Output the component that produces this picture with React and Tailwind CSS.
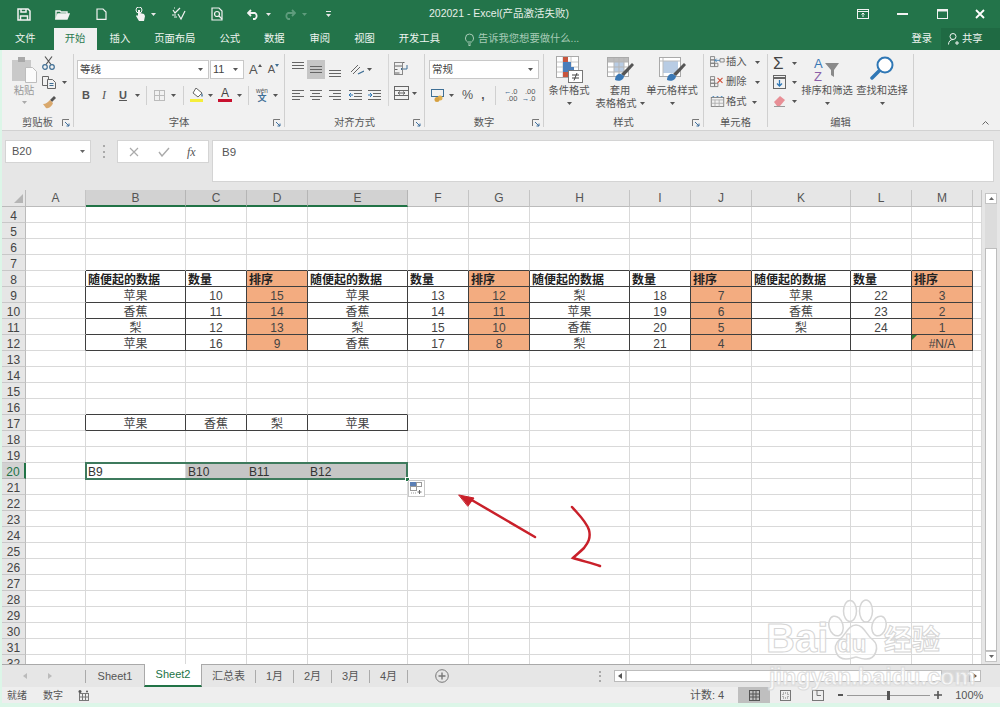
import React from 'react';

const Caret = ({ c = '#555', className = '' }) => (
  <svg width="5" height="3" viewBox="0 0 5 3" className={`shrink-0 ${className}`}><path d="M0 0h5L2.5 3z" fill={c} /></svg>
);

const Launcher = () => (
  <svg width="8" height="8" viewBox="0 0 8 8" className="shrink-0" fill="none" stroke="#777"><path d="M.5 7V.5H7" /><path d="M3 3l4 4M7 4.5V7H4.5" stroke="#3d6f9e" /></svg>
);

const Sep = ({ className = '' }) => <div className={`w-px h-[19px] bg-[#d0d0d0] shrink-0 ${className}`} />;

const Lines = ({ kind, w = 12 }) => {
  const rows = { left: [12, 8, 12, 8], center: [12, 8, 12, 8], right: [12, 8, 12, 8] }[kind];
  return (
    <svg width={w} height="10" viewBox="0 0 12 10" className="shrink-0" stroke="#666">
      {rows.map((l, i) => {
        const x = kind === 'left' ? 0 : kind === 'center' ? (12 - l) / 2 : 12 - l;
        return <path key={i} d={`M${x} ${i * 3 + 0.5}h${l}`} />;
      })}
    </svg>
  );
};

const Indent = ({ flip }) => (
  <svg width="13" height="10" viewBox="0 0 13 10" className="shrink-0" fill="none" stroke="#666">
    <path d="M0 .5h13M5 3.5h8M5 6.5h8M0 9.5h13" />
    {flip ? <path d="M0 5h3.5M2 3l2 2-2 2" stroke="#2f77b5" /> : <path d="M4 5H.5M2 3L0 5l2 2" stroke="#2f77b5" />}
  </svg>
);

const BigCond = () => (
  <svg width="27" height="27" viewBox="0 0 27 27" className="shrink-0">
    <rect x=".5" y=".5" width="22" height="21" fill="#fff" stroke="#aaa" />
    <path d="M7 1v20M15 1v20M1 6h21M1 11h21M1 16h21" stroke="#c8c8c8" />
    <rect x="7" y="1" width="5" height="5" fill="#c8553d" />
    <rect x="7" y="6" width="8" height="5" fill="#4a7ebb" />
    <rect x="7" y="11" width="11" height="5" fill="#4a7ebb" />
    <rect x="7" y="16" width="5" height="5" fill="#c8553d" />
    <rect x="12.5" y="14.5" width="14" height="12" fill="#fff" stroke="#777" />
    <path d="M16 19h7M16 22h7M21 17l-3 7.5" stroke="#444" fill="none" />
  </svg>
);

const Brush = () => (
  <g>
    <path d="M25 7l2 2-10 11-3-2z" fill="#555" />
    <path d="M8 24c0-4 3-7 6-6l3 2c0 4-5 6-9 4z" fill="#3a78b5" />
  </g>
);

const BigTable = () => (
  <svg width="27" height="27" viewBox="0 0 27 27" className="shrink-0">
    <rect x=".5" y="1.5" width="21" height="19" fill="#fff" stroke="#aaa" />
    <rect x="1" y="2" width="20" height="4" fill="#bcbcbc" />
    <rect x="7" y="6" width="10" height="10" fill="#b8cce4" />
    <path d="M7 2v18M12 2v18M17 2v18M1 6h20M1 11h20M1 16h20" stroke="#b5b5b5" />
    <Brush />
  </svg>
);

const BigStyle = () => (
  <svg width="27" height="27" viewBox="0 0 27 27" className="shrink-0">
    <rect x=".5" y="1.5" width="21" height="19" fill="#fff" stroke="#aaa" />
    <rect x="4" y="5" width="15" height="12" fill="#b8cce4" />
    <path d="M1 5h20M4 2v18" stroke="#bbb" />
    <Brush />
  </svg>
);

const CellIcon = ({ kind }) => (
  <svg width="15" height="12" viewBox="0 0 18 14" className="shrink-0" fill="none" stroke="#777">
    {kind === 'fmt' ? (
      <>
        <rect x="1.5" y="1.5" width="15" height="11" />
        <path d="M1.5 4.5h15M6 4.5v8M11 4.5v8M1.5 8.5h15" stroke="#aaa" />
        <path d="M3 .5h2M8 .5h2M13 .5h2" stroke="#2f77b5" />
      </>
    ) : (
      <>
        <path d="M.5 .5h5v4h-5zM.5 4.5h5v4h-5zM.5 8.5h5v4h-5zM5.500 8.500h4v4h-4z" />
        {kind === 'ins' ? (
          <>
            <path d="M12 5H6M8 3L6 5l2 2" stroke="#2f77b5" />
            <path d="M12 3h5v4h-5z" />
          </>
        ) : (
          <path d="M9 2l6 6M15 2L9 8" stroke="#d0513a" strokeWidth="1.4" />
        )}
      </>
    )}
  </svg>
);

const FormulaBar = () => (
  <div className="flex h-[43px] items-start">
    <div className="ml-[3px] mt-px flex h-[23px] w-[86px] items-center justify-between border border-[#d4d4d4] bg-white pl-[6px] pr-[5px] text-[11px] text-[#555]">
      <span>B20</span>
      <Caret c="#666" />
    </div>
    <div className="ml-[12px] mt-[5px] flex h-[15px] w-[2px] flex-col justify-between py-px">
      <div className="h-[2px] w-[2px] bg-[#aaa]" />
      <div className="h-[2px] w-[2px] bg-[#aaa]" />
      <div className="h-[2px] w-[2px] bg-[#aaa]" />
    </div>
    <div className="ml-[12px] mt-px flex h-[23px] w-[92px] items-center border border-[#d4d4d4] bg-white">
      <svg width="10" height="10" viewBox="0 0 10 10" className="ml-[11px]" stroke="#aaa" strokeWidth="1.2"><path d="M1 1l8 8M9 1L1 9" /></svg>
      <svg width="12" height="10" viewBox="0 0 12 10" className="ml-[19px]" fill="none" stroke="#aaa" strokeWidth="1.4"><path d="M1 5l3 4 7-8" /></svg>
      <span className="ml-[17px] font-['Liberation_Serif',serif] text-[12px] italic text-[#555]">fx</span>
    </div>
    <div className="ml-[3px] mt-px flex h-[42px] w-[782px] items-start border border-[#d4d4d4] bg-white pl-[9px] pt-[3px] text-[11.5px] text-[#555]">B9</div>
  </div>
);

const widths = 'grid-cols-[24px_60px_100px_61px_61px_100px_61px_61px_100px_61px_61px_99px_61px_61px_9px]';
const colNames = ['', 'A', 'B', 'C', 'D', 'E', 'F', 'G', 'H', 'I', 'J', 'K', 'L', 'M', ''];
const head = ['随便起的数据', '数量', '排序'];
const tableRows = {
  8: [...head, ...head, ...head, ...head],
  9: ['苹果', '10', '15', '苹果', '13', '12', '梨', '18', '7', '苹果', '22', '3'],
  10: ['香蕉', '11', '14', '香蕉', '14', '11', '苹果', '19', '6', '香蕉', '23', '2'],
  11: ['梨', '12', '13', '梨', '15', '10', '香蕉', '20', '5', '梨', '24', '1'],
  12: ['苹果', '16', '9', '香蕉', '17', '8', '梨', '21', '4', '', '', '#N/A'],
  17: ['苹果', '香蕉', '梨', '苹果'],
  20: ['B9', 'B10', 'B11', 'B12'],
};
const rowsList = Array.from({ length: 29 }, (_, i) => i + 4);

const inTable = (r, c) => {
  if (r >= 8 && r <= 12) return c >= 2 && c <= 13;
  if (r === 17) return c >= 2 && c <= 5;
  return false;
};

const Cell = ({ r, c }) => {
  const dark = { right: inTable(r, c) || inTable(r, c + 1), bottom: inTable(r, c) || inTable(r + 1, c) };
  const selected = r === 20 && c >= 3 && c <= 5;
  const orange = r >= 8 && r <= 12 && (c === 4 || c === 7 || c === 10 || c === 13);
  const text = tableRows[r] && c >= 2 ? tableRows[r][c - 2] : '';
  const right = selected ? 'border-r-[#c6c6c6]' : dark.right ? 'border-r-[#3f3f3f]' : 'border-r-[#d9d9d9]';
  const bottom = dark.bottom ? 'border-b-[#3f3f3f]' : 'border-b-[#d9d9d9]';
  const bg = selected ? 'bg-[#c6c6c6]' : orange ? 'bg-[#f3ac80]' : 'bg-white';
  const align = r === 8 ? 'text-left pl-[2px] font-bold text-[12.5px] text-[#222]' : r === 20 ? 'text-left pl-[2px] text-[#333]' : 'text-center text-[#444]';
  return (
    <div className={`relative h-[16px] overflow-hidden whitespace-nowrap border-r border-b text-[12px] leading-[18px] ${right} ${bottom} ${bg} ${align}`}>
      {r === 12 && c === 13 && (
        <svg width="5" height="5" viewBox="0 0 5 5" className="absolute left-0 top-0"><path d="M0 0h5L0 5z" fill="#2e7d32" /></svg>
      )}
      {text}
    </div>
  );
};

const Grid = () => (
  <div className={`relative grid h-[474px] w-[980px] auto-rows-[16px] grid-rows-[17px] overflow-hidden bg-white ${widths}`}>
    {colNames.map((n, c) => {
      const sel = c >= 2 && c <= 5;
      return (
        <div
          key={c}
          className={`flex h-[17px] items-center justify-center text-[12px] text-[#555] ${c === 0 ? 'border-r border-b border-r-[#bbb] border-b-[#bbb] bg-[#e6e6e6]' : sel ? 'border-r border-b-2 border-r-[#b5b5b5] border-b-[#217346] bg-[#d2d2d2]' : 'border-r border-b border-r-[#c4c4c4] border-b-[#bbb] bg-[#e6e6e6]'}`}
        >
          {c === 0 ? (
            <svg width="10" height="10" viewBox="0 0 10 10" className="ml-[10px]"><path d="M9 1v9H0z" fill="#b5b5b5" /></svg>
          ) : n}
        </div>
      );
    })}
    {rowsList.map((r) => (
      <React.Fragment key={r}>
        <div className={`h-[16px] border-b border-r text-center text-[12px] leading-[18px] text-[#444] ${r === 20 ? 'border-r-2 border-b-[#b5b5b5] border-r-[#217346] bg-[#d2d2d2] text-[#217346]' : 'border-b-[#c8c8c8] border-r-[#bbb] bg-[#e6e6e6]'}`}>{r}</div>
        {Array.from({ length: 14 }, (_, i) => <Cell key={i} r={r} c={i + 1} />)}
      </React.Fragment>
    ))}
    <div className="pointer-events-none absolute left-[83px] top-[272px] h-[18px] w-[323px] border-2 border-[#3e7a5d]" />
    <div className="absolute left-[403px] top-[287px] h-[5px] w-[5px] border border-white bg-[#217346]" />
    <div className="absolute left-[406px] top-[290px] flex h-[17px] w-[17px] items-center justify-center border border-[#c8c8c8] bg-white">
      <svg width="13" height="13" viewBox="0 0 13 13" fill="none" stroke="#999">
        <rect x=".5" y=".5" width="6" height="4" fill="#5b7fb5" stroke="#5b7fb5" />
        <rect x="6.5" y=".5" width="5" height="4" />
        <rect x=".5" y="4.5" width="6" height="4" />
        <path d="M1 11h5" strokeDasharray="1 1" />
        <path d="M9.5 8v4M7.5 10h4" stroke="#666" />
      </svg>
    </div>
  </div>
);

const VScroll = () => (
  <div className="ml-[3px] flex h-[474px] w-[12px] flex-col">
    <div className="mt-[3px] flex h-[11px] items-center justify-center border border-[#c4c4c4] bg-white">
      <svg width="5" height="3" viewBox="0 0 5 3"><path d="M2.5 0L5 3H0z" fill="#666" /></svg>
    </div>
    <div className="h-[44px] bg-[#dcdcdc]" />
    <div className="h-[403px] border border-[#bdbdbd] bg-white" />
    <div className="flex h-[11px] items-center justify-center border border-[#c4c4c4] bg-white"><Caret c="#666" /></div>
  </div>
);

const SheetTab = ({ children, w }) => (
  <div className={`flex h-full items-center justify-center text-[11px] text-[#555] ${w}`}>{children}</div>
);
const TabDiv = ({ className = '' }) => <div className={`h-[13px] w-px shrink-0 bg-[#aaa] ${className}`} />;

const SheetTabs = () => (
  <div className="flex h-[23px] items-center border-t border-[#a9a9a9] bg-[#e6e6e6]">
    <svg width="4" height="6" viewBox="0 0 4 6" className="ml-[21px]"><path d="M4 0v6L0 3z" fill="#bbb" /></svg>
    <svg width="4" height="6" viewBox="0 0 4 6" className="ml-[21px]"><path d="M0 0v6l4-3z" fill="#bbb" /></svg>
    <TabDiv className="ml-[33px]" />
    <SheetTab w="w-[58px]">Sheet1</SheetTab>
    <div className="-mt-px flex h-[23px] w-[58px] items-center justify-center border-x border-b-2 border-x-[#a9a9a9] border-b-[#217346] bg-white text-[11px] text-[#217346]">Sheet2</div>
    <SheetTab w="w-[53px]">汇总表</SheetTab>
    <TabDiv />
    <SheetTab w="w-[37px]">1月</SheetTab>
    <TabDiv />
    <SheetTab w="w-[37px]">2月</SheetTab>
    <TabDiv />
    <SheetTab w="w-[37px]">3月</SheetTab>
    <TabDiv />
    <SheetTab w="w-[37px]">4月</SheetTab>
    <TabDiv />
    <svg width="14" height="14" viewBox="0 0 14 14" className="ml-[27px]" fill="none" stroke="#777"><circle cx="7" cy="7" r="6.3" /><path d="M7 3.5v7M3.5 7h7" strokeWidth="1.4" /></svg>
    <div className="ml-[150px] flex h-[11px] w-[2px] flex-col justify-between">
      <div className="h-[2px] w-[2px] bg-[#aaa]" />
      <div className="h-[2px] w-[2px] bg-[#aaa]" />
      <div className="h-[2px] w-[2px] bg-[#aaa]" />
    </div>
    <div className="ml-[13px] flex h-[12px] w-[12px] items-center justify-center border border-[#bbb] bg-white">
      <svg width="4" height="6" viewBox="0 0 4 6"><path d="M4 0v6L0 3z" fill="#555" /></svg>
    </div>
    <div className="h-[12px] w-[316px] border border-[#bdbdbd] bg-white" />
    <div className="h-[12px] w-[27px] bg-[#d6d6d6]" />
    <div className="flex h-[12px] w-[12px] items-center justify-center border border-[#bbb] bg-white">
      <svg width="4" height="6" viewBox="0 0 4 6"><path d="M0 0v6l4-3z" fill="#555" /></svg>
    </div>
  </div>
);

const StatusBar = () => (
  <div className="flex h-[16px] items-center bg-[#eeeeee] text-[10px] text-[#555]">
    <span className="ml-[5px]">就绪</span>
    <span className="ml-[16px]">数字</span>
    <svg width="11" height="11" viewBox="0 0 11 11" className="ml-[15px]" fill="none" stroke="#777">
      <rect x="1.5" y="3.5" width="9" height="7" />
      <path d="M4.5 3.5v7M7.5 3.5v7M1.5 7h9" />
      <circle cx="2" cy="1.5" r="1.5" fill="#555" stroke="none" />
      <circle cx="9" cy="1.5" r="1" fill="#555" stroke="none" />
    </svg>
    <span className="ml-[601px] text-[11px]">计数: 4</span>
    <div className="ml-[14px] flex h-[16px] w-[32px] items-center justify-center bg-[#bfbfbf]">
      <svg width="11" height="11" viewBox="0 0 11 11" fill="none" stroke="#555"><rect x=".5" y=".5" width="10" height="10" /><path d="M4 .5v10M7 .5v10M.5 4h10M.5 7h10" /></svg>
    </div>
    <svg width="11" height="11" viewBox="0 0 11 11" className="ml-[10px]" fill="none" stroke="#777"><rect x=".5" y=".5" width="10" height="10" /><rect x="3" y="3" width="5" height="5" strokeDasharray="1 1" /></svg>
    <svg width="12" height="11" viewBox="0 0 12 11" className="ml-[21px]" fill="none" stroke="#777"><rect x=".5" y=".5" width="11" height="10" /><path d="M5 .5v5h4" /></svg>
    <div className="ml-[14px] h-[2px] w-[5px] bg-[#555]" />
    <div className="ml-[4px] flex h-[9px] w-[83px] items-center">
      <div className="h-px w-[40px] bg-[#999]" />
      <div className="h-[9px] w-[3px] bg-[#555]" />
      <div className="h-px w-[40px] bg-[#999]" />
    </div>
    <svg width="8" height="8" viewBox="0 0 8 8" className="ml-[4px] shrink-0" stroke="#555" strokeWidth="1.6"><path d="M4 0v8M0 4h8" /></svg>
    <span className="ml-[13px] text-[11px]">100%</span>
  </div>
);

const TitleBar = () => (
  <div className="flex h-[28px] items-center bg-[#23744a] text-[#e6efe9]">
    <svg width="14" height="13" viewBox="0 0 14 13" className="ml-[17px] shrink-0" fill="none" stroke="#f2f2f2" strokeWidth="1.5"><path d="M1 1h10l2 2v9H1z" /><path d="M4 1v3h5V1M3.5 12V8h7v4" /></svg>
    <svg width="15" height="11" viewBox="0 0 15 11" className="ml-[24px] shrink-0" fill="none" stroke="#f2f2f2" strokeWidth="1.4"><path d="M1 10V2h4l1 1h6v2" /><path d="M1 10l2-5h11l-2 5z" fill="#f2f2f2" /></svg>
    <svg width="11" height="12" viewBox="0 0 11 12" className="ml-[26px] shrink-0" fill="none" stroke="#f2f2f2" strokeWidth="1.2"><path d="M1 1h6l3 3v7.400H1z" /></svg>
    <svg width="11" height="14" viewBox="0 0 11 14" className="ml-[28px] shrink-0" fill="#f2f2f2"><circle cx="4" cy="3" r="3" fill="none" stroke="#f2f2f2" /><path d="M3 3h2v3l4 1 1 2-1 5H4L1 9l1-1 1 1z" /></svg>
    <Caret c="#e8e8e8" className="ml-[5px]" />
    <svg width="15" height="14" viewBox="0 0 15 14" className="ml-[15px] shrink-0" fill="none" stroke="#f2f2f2" strokeWidth="1.2"><path d="M2 3l2 3 5-5M3 1l1 0M7 7l3 5 4-8M1 8h4M3 10h3" /></svg>
    <svg width="13" height="14" viewBox="0 0 13 14" className="ml-[25px] shrink-0" fill="none" stroke="#f2f2f2" strokeWidth="1.2"><path d="M1 1h7l3 3v9H1z" /><circle cx="6" cy="7" r="2.500" /><path d="M8 9l3 3" /></svg>
    <svg width="13" height="11" viewBox="0 0 13 11" className="ml-[23px] shrink-0" fill="none" stroke="#f2f2f2" strokeWidth="1.8"><path d="M1 4h7a3.500 3.500 0 010 6H6M4 1L1 4l3 3" /></svg>
    <Caret c="#e8e8e8" className="ml-[6px]" />
    <svg width="13" height="11" viewBox="0 0 13 11" className="ml-[12px] shrink-0" fill="none" stroke="#5f9c7d" strokeWidth="1.8"><path d="M12 4H5a3.500 3.500 0 000 6h2M9 1l3 3-3 3" /></svg>
    <Caret c="#5f9c7d" className="ml-[6px]" />
    <div className="ml-[18px] flex w-[6px] shrink-0 flex-col items-center gap-[2px]">
      <div className="h-px w-[5px] bg-[#e8e8e8]" />
      <Caret c="#e8e8e8" />
    </div>
    <span className="ml-[98px] whitespace-nowrap text-[10.5px]">202021 - Excel(产品激活失败)</span>
    <div className="ml-auto flex items-center pr-[15px]">
      <svg width="12" height="10" viewBox="0 0 12 10" fill="none" stroke="#f2f2f2"><rect x=".5" y=".5" width="11" height="9" /><path d="M1 2.500h10M6 8V4M4.500 5.500L6 4l1.500 1.500" /></svg>
      <div className="ml-[28px] h-[2px] w-[11px] bg-[#f2f2f2]" />
      <svg width="11" height="10" viewBox="0 0 11 10" className="ml-[29px]" fill="none" stroke="#f2f2f2"><rect x=".5" y=".5" width="10" height="9" /><path d="M0 1.500h11" strokeWidth="2" /></svg>
      <svg width="10" height="10" viewBox="0 0 10 10" className="ml-[27px]" stroke="#fff" strokeWidth="1.8"><path d="M1 1l8 8M9 1L1 9" /></svg>
    </div>
  </div>
);

const TabItem = ({ children, ml }) => <span className={`whitespace-nowrap ${ml}`}>{children}</span>;

const TabBar = () => (
  <div className="flex h-[22px] items-center bg-[#23744a] text-[10.3px] text-[#eef4f0]">
    <TabItem ml="ml-[15px]">文件</TabItem>
    <div className="ml-[18px] flex h-[22px] w-[43px] items-center justify-center bg-[#f1f1f1] text-[#2c7a50]">开始</div>
    <TabItem ml="ml-[13px]">插入</TabItem>
    <TabItem ml="ml-[24px]">页面布局</TabItem>
    <TabItem ml="ml-[24px]">公式</TabItem>
    <TabItem ml="ml-[24px]">数据</TabItem>
    <TabItem ml="ml-[25px]">审阅</TabItem>
    <TabItem ml="ml-[24px]">视图</TabItem>
    <TabItem ml="ml-[24px]">开发工具</TabItem>
    <svg width="9" height="13" viewBox="0 0 9 13" className="ml-[25px] shrink-0" fill="none" stroke="#a9ccb8"><path d="M2.500 9C1 8 .5 6.500 .5 5a4 4 0 018 0c0 1.500-.5 3-2 4zM3 11h3M3.500 12.500h2" /></svg>
    <span className="ml-[4px] whitespace-nowrap text-[#a9ccb8]">告诉我您想要做什么...</span>
    <span className="ml-auto whitespace-nowrap">登录</span>
    <div className="ml-[9px] flex h-[22px] w-[59px] items-center bg-[#1f6a43] pl-[7px]">
      <svg width="12" height="12" viewBox="0 0 12 12" fill="none" stroke="#eef4f0"><circle cx="5" cy="3.500" r="3" /><path d="M.5 11.500c0-3 2-5 4.500-5M9 8v4M7 10h4" /></svg>
      <span className="ml-[2px]">共享</span>
    </div>
  </div>
);

const Group = ({ w, label, launcher, children }) => (
  <div className={`flex h-[73px] shrink-0 flex-col border-r border-[#d0d0d0] ${w}`}>
    <div className="h-[62px]">{children}</div>
    <div className="grid h-[11px] grid-cols-[1fr_auto_1fr] items-center text-[10.3px] leading-[13px] text-[#555]">
      <div />
      <span>{label}</span>
      <div className="flex justify-end pr-[3px]">{launcher && <Launcher />}</div>
    </div>
  </div>
);

const Clipboard = () => (
  <Group w="w-[72px]" label="剪贴板" launcher>
    <div className="flex">
      <div className="ml-[10px] flex w-[24px] flex-col items-center pt-[3px]">
        <svg width="25" height="26" viewBox="0 0 25 26" className="shrink-0">
          <rect x="0" y="3" width="19" height="21" fill="#c9c9c9" />
          <rect x="6" y="0" width="7" height="5" fill="#a9a9a9" />
          <path d="M13.500 10.500h7l4 4v11h-11z" fill="#fbfbfb" stroke="#bdbdbd" />
        </svg>
        <span className="mt-[1px] text-[10.3px] leading-[13px] text-[#999]">粘贴</span>
        <Caret c="#aaa" className="mt-[4px]" />
      </div>
      <div className="ml-[6px] flex flex-col pt-[2px]">
        <svg width="13" height="14" viewBox="0 0 13 14" fill="none" stroke="#3f6f95" strokeWidth="1.2"><path d="M3 .5l6 8M10 .5l-6 8" stroke="#555" /><circle cx="3" cy="11" r="2.300" /><circle cx="10" cy="11" r="2.300" /></svg>
        <div className="mt-[6px] flex items-center">
          <svg width="14" height="13" viewBox="0 0 14 13" fill="none" stroke="#666"><path d="M.5.500h6v9h-6z" /><path d="M5.500 3.500h5l3 3v6h-8z" fill="#f1f1f1" /><path d="M7.500 7.500h4M7.500 9.500h4" stroke="#3f6f95" /></svg>
          <Caret className="ml-[6px]" />
        </div>
        <svg width="14" height="14" viewBox="0 0 14 14" className="mt-[6px]"><path d="M8 5l4-4 2 2-4 4z" fill="#555" /><path d="M1 9c3 0 5-2 7-4l3 3c-1 3-4 6-7 5z" fill="#d9a86c" /></svg>
      </div>
    </div>
  </Group>
);

const FontGroup = () => (
  <Group w="w-[211px]" label="字体" launcher>
    <div className="ml-[3px] mt-[6px] flex h-[19px] items-center">
      <div className="flex h-[19px] w-[132px] items-center justify-between border border-[#c8c8c8] bg-white pl-[2px] pr-[5px] text-[10.5px] text-[#444]">
        <span>等线</span><Caret />
      </div>
      <div className="ml-px flex h-[19px] w-[34px] items-center justify-between border border-[#c8c8c8] bg-white pl-[2px] pr-[5px] text-[11px] text-[#444]">
        <span>11</span><Caret />
      </div>
      <span className="ml-[5px] text-[13px] leading-none text-[#555]">A</span>
      <svg width="4" height="3" viewBox="0 0 4 3" className="mb-[8px]"><path d="M2 0l2 3H0z" fill="#555" /></svg>
      <span className="ml-[6px] text-[11px] leading-none text-[#555]">A</span>
      <svg width="4" height="3" viewBox="0 0 4 3" className="mb-[8px]"><path d="M0 0h4L2 3z" fill="#3f6f95" /></svg>
    </div>
    <div className="ml-[8px] mt-[6px] flex h-[20px] items-center text-[#555]">
      <span className="w-[7px] text-[11px] font-bold leading-none">B</span>
      <span className="ml-[13px] w-[5px] font-['Liberation_Serif',serif] text-[12px] italic leading-none">I</span>
      <span className="ml-[12px] w-[8px] text-[11px] font-bold leading-none underline">U</span>
      <Caret className="ml-[8px]" />
      <Sep className="ml-[6px]" />
      <svg width="11" height="11" viewBox="0 0 11 11" className="ml-[7px]" fill="none" stroke="#bbb"><rect x=".5" y=".5" width="10" height="10" /><path d="M5.500 .5v10M.5 5.500h10" /></svg>
      <Caret className="ml-[6px]" />
      <Sep className="ml-[7px]" />
      <div className="ml-[6px] flex w-[13px] flex-col items-center">
        <svg width="12" height="10" viewBox="0 0 12 10"><path d="M5 0l6 5-4 4-5-4z" fill="#fff" stroke="#666" /><path d="M11 5c1 2 1 3 0 4-1-1-1-2 0-4z" fill="#3f6f95" /></svg>
        <div className="mt-px h-[3px] w-[13px] bg-[#f5ee3a]" />
      </div>
      <Caret className="ml-[5px]" />
      <div className="ml-[5px] flex w-[14px] flex-col items-center">
        <span className="h-[10px] text-[12px] leading-[10px] text-[#444]">A</span>
        <div className="mt-px h-[3px] w-[14px] bg-[#c8102e]" />
      </div>
      <Caret className="ml-[5px]" />
      <Sep className="ml-[6px]" />
      <div className="ml-[6px] flex w-[14px] flex-col items-center">
        <span className="h-[6px] text-[6.5px] leading-[6px]">wén</span>
        <span className="h-[9px] text-[9px] font-bold leading-[9px] text-[#3f6f95]">文</span>
      </div>
      <Caret className="ml-[4px]" />
    </div>
  </Group>
);

const AlignGroup = () => (
  <Group w="w-[140px]" label="对齐方式" launcher>
    <div className="flex h-[60px]">
      <div className="w-[103px]">
        <div className="mt-[6px] flex h-[19px] items-center">
          <svg width="12" height="8" viewBox="0 0 12 8" className="mb-[8px] ml-[7px]" stroke="#666"><path d="M0 .5h12M0 3.500h12M0 6.500h12" /></svg>
          <div className="ml-[3px] flex h-[19px] w-[18px] items-center justify-center bg-[#c6c6c6]">
            <svg width="12" height="8" viewBox="0 0 12 8" stroke="#666"><path d="M0 .5h12M0 3.500h12M0 6.500h12" /></svg>
          </div>
          <svg width="12" height="8" viewBox="0 0 12 8" className="ml-[4px] mt-[8px]" stroke="#666"><path d="M0 .5h12M0 3.500h12M0 6.500h12" /></svg>
          <svg width="14" height="12" viewBox="0 0 14 12" className="ml-[9px]" fill="none" stroke="#666"><path d="M1 8l7-7M3 10l7-7" /><path d="M8 10l6-3" stroke="#3f6f95" strokeWidth="1.300" /></svg>
          <Caret className="ml-[3px]" />
        </div>
        <div className="mt-[6px] flex h-[20px] items-center">
          <div className="ml-[7px]"><Lines kind="left" /></div>
          <div className="ml-[6px]"><Lines kind="center" /></div>
          <div className="ml-[7px]"><Lines kind="right" /></div>
          <div className="ml-[8px]"><Indent /></div>
          <div className="ml-[6px]"><Indent flip /></div>
        </div>
      </div>
      <div className="h-[52px] w-px bg-[#d6d6d6]" />
      <div className="ml-[5px]">
        <svg width="14" height="13" viewBox="0 0 14 13" className="mt-[8px]" fill="none" stroke="#666"><path d="M.5 .5h10M.5 4h8M.5 7.500h3M.5 11h5" /><path d="M13 3v4H7M9 5L7 7l2 2" stroke="#3f6f95" /><rect x=".5" y=".5" width="8" height="12" stroke="#888" /></svg>
        <div className="mt-[11px] flex items-center">
          <svg width="15" height="14" viewBox="0 0 15 14" fill="none" stroke="#666"><rect x=".5" y=".5" width="14" height="13" /><path d="M.5 4.500h14M.5 9.500h14M4 7h7M6 5.500L4 7l2 1.500M9 5.500L11 7 9 8.500" /></svg>
          <Caret className="ml-[3px]" />
        </div>
      </div>
    </div>
  </Group>
);

const NumberGroup = () => (
  <Group w="w-[119px]" label="数字" launcher>
    <div className="ml-[4px] mt-[6px] flex h-[19px] w-[110px] items-center justify-between border border-[#c8c8c8] bg-white pl-[2px] pr-[5px] text-[10.5px] text-[#444]">
      <span>常规</span><Caret />
    </div>
    <div className="mt-[6px] flex h-[20px] items-center text-[#555]">
      <svg width="14" height="13" viewBox="0 0 14 13" className="ml-[6px]" fill="none"><rect x=".5" y=".5" width="12" height="7" stroke="#3f6f95" /><circle cx="9" cy="9" r="2.500" fill="#e0b050" /><circle cx="6" cy="10.500" r="2.500" fill="#d6a040" /></svg>
      <Caret className="ml-[4px]" />
      <span className="ml-[8px] text-[12.5px] leading-none">%</span>
      <span className="ml-[8px] text-[12px] font-bold leading-none">,</span>
      <Sep className="ml-[11px]" />
      <div className="ml-[7px] flex w-[14px] flex-col text-[7.5px] leading-[7px]">
        <span className="text-right"><span className="text-[#3f6f95]">←</span>.0</span>
        <span className="text-right">.00</span>
      </div>
      <div className="ml-[4px] flex w-[14px] flex-col text-[7.5px] leading-[7px]">
        <span className="text-right">.00</span>
        <span className="text-right"><span className="text-[#3f6f95]">→</span>.0</span>
      </div>
    </div>
  </Group>
);

const BigBtn = ({ icon, w, ml, l1, l2 }) => (
  <div className={`flex flex-col items-center ${w} ${ml}`}>
    <div className="mt-[2px] h-[28px]">{icon}</div>
    <span className="whitespace-nowrap text-[10.3px] leading-[13px] text-[#555]">{l1}</span>
    {l2 ? (
      <span className="flex items-center whitespace-nowrap text-[10.3px] leading-[13px] text-[#555]">{l2}<Caret className="ml-[3px]" /></span>
    ) : (
      <Caret className="mt-[5px]" />
    )}
  </div>
);

const StyleGroup = () => (
  <Group w="w-[160px]" label="样式" launcher>
    <div className="flex">
      <BigBtn icon={<BigCond />} w="w-[50px]" ml="ml-[0px]" l1="条件格式" />
      <BigBtn icon={<BigTable />} w="w-[50px]" ml="ml-[1px]" l2="表格格式" l1="套用" />
      <BigBtn icon={<BigStyle />} w="w-[54px]" ml="ml-[0px]" l1="单元格样式" />
    </div>
  </Group>
);

const CellRow = ({ kind, text, mt, caretMl }) => (
  <div className={`ml-[6px] flex h-[14px] items-center text-[10.3px] text-[#555] ${mt}`}>
    <CellIcon kind={kind} />
    <span className="ml-[1px] whitespace-nowrap">{text}</span>
    <Caret className={caretMl} />
  </div>
);

const CellsGroup = () => (
  <Group w="w-[64px]" label="单元格">
    <CellRow kind="ins" text="插入" mt="mt-[1px]" caretMl="ml-[8px]" />
    <CellRow kind="del" text="删除" mt="mt-[6px]" caretMl="ml-[8px]" />
    <CellRow kind="fmt" text="格式" mt="mt-[6px]" caretMl="ml-[5px]" />
  </Group>
);

const EditGroup = () => (
  <Group w="w-[146px]" label="编辑">
    <div className="flex">
      <div className="ml-[5px] flex w-[27px] flex-col">
        <div className="mt-[2px] flex h-[14px] items-center">
          <span className="w-[14px] text-[17px] leading-none text-[#444]">Σ</span>
          <Caret className="ml-[5px]" />
        </div>
        <div className="mt-[5px] flex h-[14px] items-center">
          <svg width="13" height="14" viewBox="0 0 13 14" fill="none" stroke="#666"><rect x=".5" y=".5" width="12" height="13" /><path d="M.5 3h12" strokeWidth="2" /><path d="M6.500 5v6M4 8.500l2.500 2.500L9 8.500" stroke="#2f77b5" strokeWidth="1.300" /></svg>
          <Caret className="ml-[6px]" />
        </div>
        <div className="mt-[5px] flex h-[14px] items-center">
          <svg width="13" height="12" viewBox="0 0 13 12"><path d="M1 7l6-6 5 4-5 6H4z" fill="#e88f96" /><path d="M1 11.500h11" stroke="#999" /></svg>
          <Caret className="ml-[6px]" />
        </div>
      </div>
      <div className="flex w-[54px] flex-col items-center">
        <svg width="26" height="28" viewBox="0 0 26 28" className="mt-[2px] overflow-visible">
          <text x="0" y="12" fontSize="13" fontFamily="Liberation Sans" fill="#3a78b5">A</text>
          <text x="0" y="25" fontSize="13" fontFamily="Liberation Sans" fill="#8a5fa8">Z</text>
          <path d="M11 7h14l-5 7v7l-3-2v-5z" fill="#8a8a8a" />
        </svg>
        <span className="whitespace-nowrap text-[10.3px] leading-[13px] text-[#555]">排序和筛选</span>
        <Caret className="mt-[5px]" />
      </div>
      <div className="ml-[1px] flex w-[54px] flex-col items-center">
        <svg width="24" height="28" viewBox="0 0 24 28" className="mt-[2px]" fill="none"><circle cx="15" cy="9" r="7.500" stroke="#2f77b5" strokeWidth="2" fill="#fff" /><path d="M9 15l-7 7" stroke="#2f77b5" strokeWidth="3.500" strokeLinecap="round" /></svg>
        <span className="whitespace-nowrap text-[10.3px] leading-[13px] text-[#555]">查找和选择</span>
        <Caret className="mt-[5px]" />
      </div>
    </div>
  </Group>
);

const Ribbon = () => (
  <div className="flex h-[81px] border-b border-[#d2d2d2] bg-[#f1f1f1] pt-[4px]">
    <Clipboard />
    <FontGroup />
    <AlignGroup />
    <NumberGroup />
    <StyleGroup />
    <CellsGroup />
    <EditGroup />
    <div className="flex flex-1 items-end justify-end pb-[5px] pr-[11px]">
      <svg width="7" height="4" viewBox="0 0 7 4" fill="none" stroke="#666"><path d="M.5 3.500l3-3 3 3" /></svg>
    </div>
  </div>
);

const Annotation = () => (
  <svg width="1000" height="707" viewBox="0 0 1000 707" className="pointer-events-none absolute left-0 top-0" fill="none" stroke="#c9202a" strokeWidth="2.500" strokeLinecap="round">
    <path d="M535 537L470 499" />
    <path d="M459 495l15 3-6 8z" fill="#c9202a" strokeWidth="1" />
    <path d="M572 507c6 7 14 14 17 23 2 8-1 13-5 18-4 4-8 7-11 10 9 3 19 5 27 8" />
  </svg>
);

const Watermark = () => (
  <div className="pointer-events-none absolute left-[760px] top-[596px] h-[100px] w-[200px]">
    <svg width="70" height="72" viewBox="0 0 70 72" className="absolute left-[62px] top-0" fill="#ffffff" fillOpacity="0.5" stroke="#d6d6d6" strokeWidth="1.5">
      <ellipse cx="14" cy="30" rx="7" ry="10" transform="rotate(-15 14 30)" />
      <ellipse cx="28" cy="15" rx="6.500" ry="10.500" />
      <ellipse cx="44" cy="15" rx="6.500" ry="11" />
      <ellipse cx="57" cy="30" rx="7" ry="10" transform="rotate(15 57 30)" />
      <path d="M34 29c8 0 10 10 17 15 7 6 3 20-8 19-5 0-7-2-9-2s-5 2-10 2c-10 0-14-12-7-19 7-5 9-15 17-15z" />
    </svg>
    <span className="absolute left-[6px] top-[22px] whitespace-nowrap text-[40px] font-bold leading-[40px] text-white/60 [-webkit-text-stroke:1px_#d6d6d6]">Bai</span>
    <span className="absolute left-[77px] top-[34px] whitespace-nowrap text-[24px] font-bold leading-[28px] text-white/60 [-webkit-text-stroke:1px_#d6d6d6]">du</span>
    <span className="absolute left-[124px] top-[29px] whitespace-nowrap text-[28px] font-bold leading-[32px] text-white/60 [-webkit-text-stroke:1px_#d6d6d6]">经验</span>
    <span className="absolute left-[9px] top-[68px] whitespace-nowrap text-[23.5px] font-bold leading-[26px] text-white/70 [-webkit-text-stroke:1px_#dcdcdc]">jingyan.baidu.com</span>
  </div>
);

export default function App() {
  return (
    <div className="relative flex h-[707px] w-[1000px] flex-col overflow-hidden bg-[#dcf6e8] font-['Liberation_Sans','Noto_Sans_CJK_SC',sans-serif]">
      <TitleBar />
      <TabBar />
      <div className="flex flex-col pl-[2px]">
        <Ribbon />
        <div className="bg-[#e6e6e6] pt-[8px]">
          <FormulaBar />
          <div className="h-[8px]" />
          <div className="flex">
            <Grid />
            <VScroll />
            <div className="w-[3px] bg-[#e6e6e6]" />
          </div>
          <SheetTabs />
          <StatusBar />
        </div>
      </div>
      <Annotation />
      <Watermark />
    </div>
  );
}
